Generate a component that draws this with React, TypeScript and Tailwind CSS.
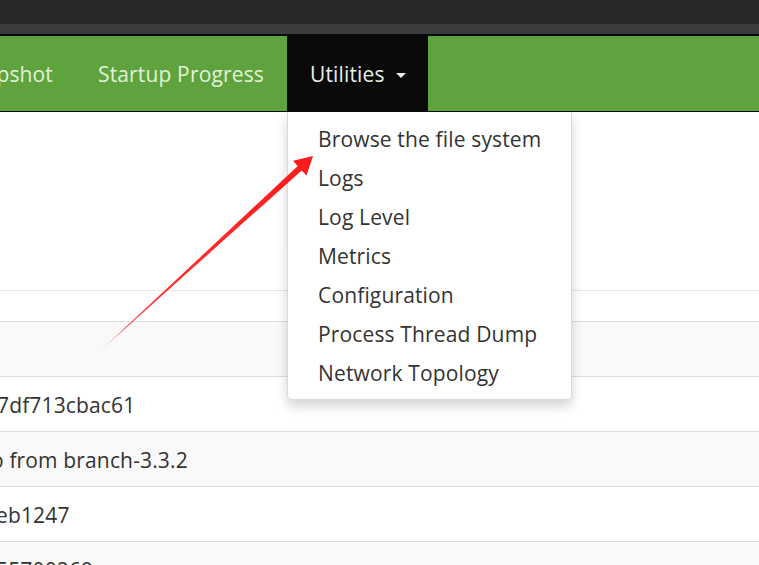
import React from "react";

const menuItems = [
  "Browse the file system",
  "Logs",
  "Log Level",
  "Metrics",
  "Configuration",
  "Process Thread Dump",
  "Network Topology",
];

export default function App() {
  return (
    <div
      className="relative w-[759px] h-[565px] overflow-hidden bg-white text-[#333] tracking-[0.15px]"
      style={{ fontFamily: '"Open Sans", "Noto Sans", sans-serif' }}
    >
      {/* browser chrome */}
      <div className="h-[24px] bg-[#282828]" />
      <div className="h-[10px] bg-[#3c3c3c]" />
      <div className="h-[2px] bg-[#0a0a0a]" />

      {/* navbar */}
      <div className="flex h-[76px] bg-[#5fa33e] border-b border-[#0a0a0a] text-[21px] text-[#e2f2d9]">
        <div className="w-[75px] shrink-0 overflow-hidden flex justify-end items-center pt-[2px] pr-[22px] whitespace-nowrap">
          Snapshot
        </div>
        <div className="w-[212px] shrink-0 flex items-center pt-[2px] pl-[23px] whitespace-nowrap">
          Startup Progress
        </div>
        <div className="w-[141px] shrink-0 flex items-center pt-[2px] pl-[23px] bg-[#0a0a0a] whitespace-nowrap text-[#e6eee6]">
          Utilities
          <span className="ml-[11px] mt-[2px] w-0 h-0 border-l-[5px] border-r-[5px] border-t-[5px] border-l-transparent border-r-transparent border-t-[#e6eee6]" />
        </div>
        <div className="flex-1" />
      </div>

      {/* content */}
      <div className="text-[21px]">
        <div className="h-[178px]" />
        <div className="h-[31px] border-t border-[#e6e6e6]" />
        <div className="h-[55px] border-t border-[#dddddd] bg-[#f9f9f9]" />
        <div className="h-[55px] border-t border-[#dddddd] bg-white flex items-center pt-[3px] whitespace-nowrap">
          <span className="ml-[-3px]">7df713cbac61</span>
        </div>
        <div className="h-[55px] border-t border-[#dddddd] bg-[#f9f9f9] flex items-center pt-[3px] whitespace-nowrap">
          <span className="ml-[-9px]">o from branch-3.3.2</span>
        </div>
        <div className="h-[55px] border-t border-[#dddddd] bg-white flex items-center pt-[3px] whitespace-nowrap">
          <span className="ml-[-4px]">eb1247</span>
        </div>
        <div className="h-[55px] border-t border-[#dddddd] bg-[#f9f9f9] flex items-center pt-[3px] whitespace-nowrap">
          <span className="ml-[-4px]">55700269</span>
        </div>
      </div>

      {/* dropdown menu */}
      <div className="absolute left-[287px] top-[112px] w-[285px] pt-[8px] pb-[6px] bg-white border border-t-0 border-[rgba(0,0,0,0.15)] rounded-b-[5px] shadow-[0_6px_12px_rgba(0,0,0,0.175)] text-[21px]">
        {menuItems.map((m) => (
          <div key={m} className="h-[39px] flex items-center pl-[30px] whitespace-nowrap text-[#333]">
            {m}
          </div>
        ))}
      </div>

      {/* red arrow annotation */}
      <svg className="absolute left-0 top-0 pointer-events-none" width="759" height="565">
        <defs>
          <linearGradient id="ag" x1="99" y1="352" x2="313" y2="156" gradientUnits="userSpaceOnUse">
            <stop offset="0" stopColor="#ff2a2a" stopOpacity="0.15" />
            <stop offset="0.12" stopColor="#ff2020" stopOpacity="0.9" />
            <stop offset="1" stopColor="#ff1a1a" />
          </linearGradient>
        </defs>
        <polygon
          points="99,352 297.7,166 293,160.8 313,156 306.5,175.6 301.7,170.4"
          fill="url(#ag)"
        />
      </svg>
    </div>
  );
}
